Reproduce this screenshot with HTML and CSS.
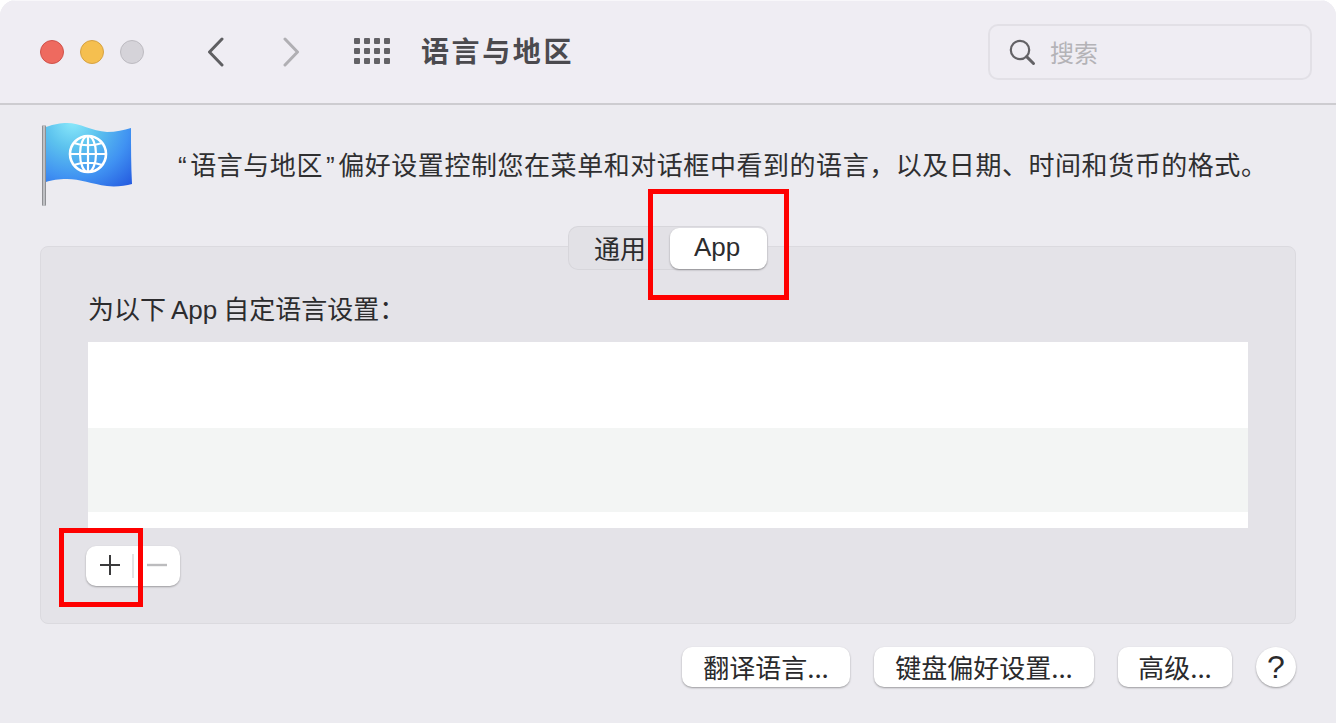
FILE: index.html
```html
<!DOCTYPE html>
<html lang="zh-CN">
<head>
<meta charset="utf-8">
<title>语言与地区</title>
<link rel="stylesheet" href="styles.css">
</head>
<body>
<div class="window">
  <header class="titlebar">
    <div class="lights">
      <span class="light red"></span>
      <span class="light yellow"></span>
      <span class="light gray"></span>
    </div>
    <div class="nav">
      <svg class="chev" width="20" height="30" viewBox="0 0 20 30"><path d="M16 2 L3.5 15 L16 28" fill="none" stroke="#5f5f62" stroke-width="3" stroke-linecap="round" stroke-linejoin="round"/></svg>
      <svg class="chev" width="20" height="30" viewBox="0 0 20 30"><path d="M4 2 L16.5 15 L4 28" fill="none" stroke="#b0afb3" stroke-width="3" stroke-linecap="round" stroke-linejoin="round"/></svg>
    </div>
    <div class="grid-icon">
      <i></i><i></i><i></i><i></i><i></i><i></i><i></i><i></i><i></i><i></i><i></i><i></i>
    </div>
    <h1 class="title">语言与地区</h1>
    <div class="search">
      <svg width="28" height="28" viewBox="0 0 28 28"><circle cx="12" cy="12" r="9.2" fill="none" stroke="#636266" stroke-width="2.2"/><path d="M18.6 18.6 L25.5 25.5" stroke="#636266" stroke-width="3" stroke-linecap="round"/></svg>
      <span class="search-text">搜索</span>
    </div>
  </header>
  <section class="intro">
    <svg class="flag" width="96" height="90" viewBox="0 0 96 90">
      <defs>
        <radialGradient id="fg" gradientUnits="userSpaceOnUse" cx="33" cy="0" r="92">
          <stop offset="0" stop-color="#8beafb"/>
          <stop offset="0.3" stop-color="#5cc2ee"/>
          <stop offset="0.62" stop-color="#4092f2"/>
          <stop offset="1" stop-color="#1f4fdc"/>
        </radialGradient>
        <linearGradient id="pole" x1="0" x2="1" y1="0" y2="0">
          <stop offset="0" stop-color="#77777b"/>
          <stop offset="0.5" stop-color="#d6d8dc"/>
          <stop offset="1" stop-color="#77777b"/>
        </linearGradient>
      </defs>
      <path d="M6 6 C15 3 20 2 27 2 C40 2 52 10 67 11 C76 11 84 9 91 7 C91 25 91 45 92 63 C85 65 75 66 67 65 C52 63 40 58 27 58 C18 58 12 59 6 61 Z" fill="url(#fg)"/>
      <rect x="2" y="4" width="4" height="81" rx="1.5" fill="url(#pole)"/>
      <g fill="none" stroke="#fff" stroke-width="2.2">
        <circle cx="48" cy="33" r="18" stroke-width="2.6"/>
        <ellipse cx="48" cy="33" rx="8" ry="18"/>
        <path d="M48 15 V51 M30 33 H66 M34 22 C42 25 54 25 62 22 M34 44 C42 41 54 41 62 44"/>
      </g>
    </svg>
    <p class="desc"><span class="q">“</span>语言与地区<span class="q">”</span>偏好设置控制您在菜单和对话框中看到的语言&#xFF0C;以及日期、时间和货币的格式。</p>
  </section>
  <main class="panel">
    <div class="tabs">
      <span class="tab">通用</span>
      <span class="tab active">App</span>
    </div>
    <p class="label">为以下<span class="latin">App</span>自定语言设置&#xFF1A;</p>
    <div class="list">
      <div class="row row-a"></div>
      <div class="row row-b"></div>
      <div class="row row-c"></div>
    </div>
    <div class="plusminus">
      <span class="pm plus"><svg width="22" height="22" viewBox="0 0 22 22"><path d="M11 1 V21 M1 11 H21" stroke="#3a3a3c" stroke-width="2"/></svg></span>
      <span class="pm-sep"></span>
      <span class="pm minus"><svg width="22" height="22" viewBox="0 0 22 22"><path d="M1 11 H21" stroke="#bcbcbe" stroke-width="2.4"/></svg></span>
    </div>
  </main>
  <footer class="actions">
    <button class="btn b1">翻译语言...</button>
    <button class="btn b2">键盘偏好设置...</button>
    <button class="btn b3">高级...</button>
    <button class="help">?</button>
  </footer>
  <div class="mark mark-app"></div>
  <div class="mark mark-plus"></div>
</div>
</body>
</html>
```
FILE: styles.css
```css
* { box-sizing: border-box; }
html, body { margin: 0; padding: 0; background: #fff; }
body { width: 1336px; height: 723px; overflow: hidden; font-family: "Noto Sans CJK SC", "Liberation Sans", sans-serif; color: #2a2a2c; }
.window { position: relative; width: 1336px; height: 723px; background: #ecebf0; border-radius: 16px 16px 0 0; overflow: hidden; }
.titlebar { height: 105px; background: #efedf3; border-bottom: 2px solid #cdccd0; box-shadow: inset 0 1px #f8f7fa; display: flex; align-items: center; padding: 0 24px 0 40px; }
.lights { display: flex; gap: 16px; margin-right: 62px; }
.light { width: 24px; height: 24px; border-radius: 50%; border: 1px solid; }
.red { background: #ee6a5f; border-color: #d0524a; }
.yellow { background: #f5bf4f; border-color: #d6a243; }
.gray { background: #d5d3d9; border-color: #bdbbc1; }
.nav { display: flex; gap: 55px; margin-right: 53px; }
.chev { display: block; }
.grid-icon { display: grid; grid-template-columns: repeat(4, 6px); grid-auto-rows: 6px; gap: 4px; margin: -2px 31px 0 0; }
.grid-icon i { background: #636266; border-radius: 1px; }
.title { margin: -3px 0 0; font-size: 28px; font-weight: 700; color: #4b4a4e; line-height: 40px; flex: 1; letter-spacing: 2.6px; }
.search { width: 324px; height: 56px; border: 2px solid #e2e0e6; border-radius: 10px; display: flex; align-items: center; padding-left: 18px; gap: 14px; }
.search-text { font-size: 24px; color: #b4b3b7; }
.intro { height: 104px; display: flex; padding: 0 0 0 40px; align-items: flex-start; }
.flag { display: block; margin-top: 16px; flex: none; }
.desc { margin: 41px 0 0 39px; font-size: 26px; line-height: 36px; letter-spacing: .55px; white-space: nowrap; color: #2f2f31; }
.q { font-family: "Liberation Sans", sans-serif; margin: 0 3px; }
.panel { margin: 37px 40px 0; height: 378px; background: #e4e3e8; border: 1px solid #dbdadf; border-radius: 8px; display: flex; flex-direction: column; padding: 0 47px; position: relative; }
.tabs { align-self: center; margin-top: -21px; height: 44px; width: 200px; background: #e2e1e6; border: 1px solid #d7d6db; border-right: 0; border-radius: 10px; display: flex; align-items: center; padding-left: 25px; font-size: 26px; }
.tab { line-height: 40px; color: #2c2c2e; white-space: nowrap; }
.tab.active { margin-left: 24px; width: 97px; height: 41px; padding-right: 3px; background: #fff; border-radius: 9px; text-align: center; box-shadow: 0 1px 2px rgba(0,0,0,.35); font-family: "Liberation Sans", sans-serif; font-size: 26px; line-height: 38px; }
.label { margin: 20px 0 0; font-size: 26px; line-height: 36px; height: 36px; color: #2c2c2e; white-space: nowrap; }
.latin { font-family: "Liberation Sans", sans-serif; margin: 0 6px 0 5px; }
.list { margin-top: 16px; height: 186px; display: flex; flex-direction: column; }
.row-a { height: 86px; background: #fff; }
.row-b { height: 84px; background: #f3f5f4; }
.row-c { height: 16px; background: #fff; }
.plusminus { margin: 18px 0 0 -2px; width: 94px; height: 40px; background: #fff; border-radius: 10px; box-shadow: 0 1px 2px rgba(0,0,0,.32); display: flex; align-items: center; }
.pm { display: flex; align-items: center; justify-content: center; padding-bottom: 3px; }
.plus { width: 46px; padding-left: 1px; }
.minus { width: 46px; }
.pm-sep { width: 2px; height: 24px; background: #e2e2e4; }
.actions { display: flex; justify-content: flex-end; margin: 23px 40px 0 0; gap: 24px; align-items: center; }
.btn { height: 40px; padding: 0; background: #fff; border: 0; border-radius: 10px; box-shadow: 0 1px 2px rgba(0,0,0,.35); font-family: "Noto Sans CJK SC", sans-serif; font-size: 26px; line-height: 36px; color: #2a2a2c; white-space: nowrap; }
.b1 { width: 168px; }
.b2 { width: 220px; }
.b3 { width: 114px; }
.help { width: 40px; height: 40px; padding: 0; border: 0; border-radius: 50%; background: #fff; box-shadow: 0 1px 2px rgba(0,0,0,.35); font-family: "Liberation Sans", sans-serif; font-size: 32px; color: #2a2a2c; line-height: 40px; }
.mark { position: absolute; border: 5px solid #fe0000; }
.mark-app { left: 648px; top: 189px; width: 141px; height: 111px; }
.mark-plus { left: 59px; top: 528px; width: 84px; height: 79px; }
```
